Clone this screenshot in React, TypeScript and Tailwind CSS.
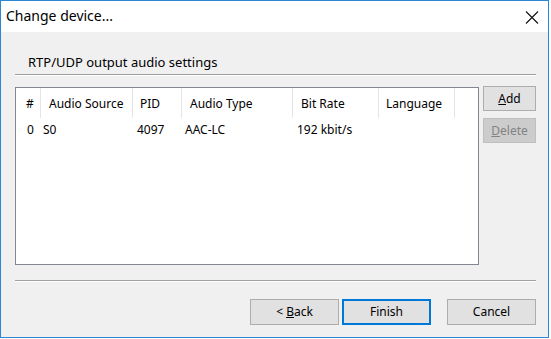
import React from 'react';

const columns = [
  { label: '#', width: 'w-[25px]', head: 'pl-[10px]', cell: 'pl-[11px]' },
  { label: 'Audio Source', width: 'w-[92px]', head: 'pl-[8px]', cell: 'pl-[2px]' },
  { label: 'PID', width: 'w-[49px]', head: 'pl-[7px]', cell: 'pl-[4px]' },
  { label: 'Audio Type', width: 'w-[111px]', head: 'pl-[8px]', cell: 'pl-[3px]' },
  { label: 'Bit Rate', width: 'w-[86px]', head: 'pl-[8px]', cell: 'pl-[4px]' },
  { label: 'Language', width: 'w-[76px]', head: 'pl-[7px]', cell: 'pl-[4px]' },
];

const rows = [['0', 'S0', '4097', 'AAC-LC', '192 kbit/s', '']];

function Btn({ children, primary, disabled, className = '' }: { children: React.ReactNode; primary?: boolean; disabled?: boolean; className?: string }) {
  let look = 'border border-[#adadad] bg-[#e1e1e1] text-black';
  if (primary) look = 'border-2 border-[#0078d7] bg-[#e1e1e1] text-black';
  if (disabled) look = 'border border-[#bfbfbf] bg-[#cccccc] text-[#838383]';
  return (
    <div className={`flex items-center justify-center ${look} ${className}`}>
      {children}
    </div>
  );
}

export default function App() {
  return (
    <div className="w-[551px] h-[339px] bg-white" style={{ fontFamily: '"Noto Sans", "Liberation Sans", sans-serif' }}>
      <div className="w-[549px] h-[338px] border border-[#2b86d5] flex flex-col text-[12px] leading-[16px] text-black">
        {/* title bar */}
        <div className="h-[31px] bg-white flex items-center justify-between pl-[5px] pr-[9px] shrink-0">
          <span className="text-[14px] leading-[18px] -mt-[1px]">Change device...</span>
          <svg width="14" height="13" viewBox="0 0 14 13" className="mt-[1px]">
            <path d="M1 0.5 L13 12.5 M13 0.5 L1 12.5" stroke="#111" strokeWidth="1.1" fill="none" />
          </svg>
        </div>

        {/* body */}
        <div className="flex-1 bg-[#f0f0f0] flex flex-col pl-[14px] pr-[12px]">
          <div className="mt-[22px] pl-[13px] text-[13px] leading-[17px]">RTP/UDP output audio settings</div>
          <div className="mt-[3px] h-[2px] border-t border-[#a0a0a0] border-b border-b-white" />

          <div className="mt-[11px] flex gap-[4px]">
            <div className="w-[465px] h-[178px] border border-[#828790] bg-white">
              <div className="flex h-[30px]">
                {columns.map((c, i) => (
                  <div key={i} className={`${c.width} ${c.head} h-[30px] pt-[2px] flex items-center border-r border-[#e5e5e5] whitespace-nowrap`}>
                    {c.label}
                  </div>
                ))}
              </div>
              {rows.map((r, ri) => (
                <div key={ri} className="flex h-[20px] mt-[2px] items-center">
                  {r.map((v, ci) => (
                    <div key={ci} className={`${columns[ci].width} ${columns[ci].cell} whitespace-nowrap`}>
                      {v}
                    </div>
                  ))}
                </div>
              ))}
            </div>
            <div className="flex flex-col gap-[7px] -mt-[1px]">
              <Btn className="w-[53px] h-[25px]"><span><span className="underline">A</span>dd</span></Btn>
              <Btn disabled className="w-[53px] h-[25px]"><span><span className="underline">D</span>elete</span></Btn>
            </div>
          </div>

          <div className="mt-[15px] h-[2px] border-t border-[#a0a0a0] border-b border-b-white" />

          <div className="mt-[17px] flex justify-end">
            <Btn className="w-[89px] h-[26px]"><span>&lt; <span className="underline">B</span>ack</span></Btn>
            <Btn primary className="w-[89px] h-[26px] ml-[3px]">Finish</Btn>
            <Btn className="w-[89px] h-[26px] ml-[16px]">Cancel</Btn>
          </div>
        </div>
      </div>
    </div>
  );
}
